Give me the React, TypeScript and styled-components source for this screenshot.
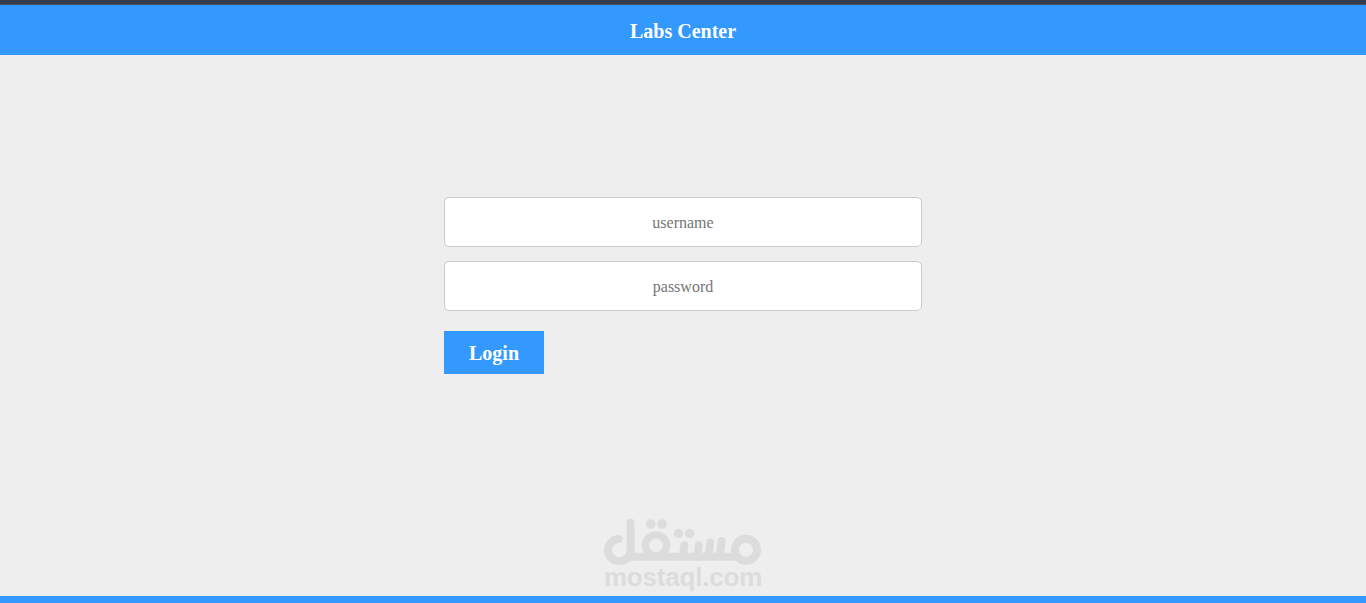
import React, { useState } from 'react'
import styled, { createGlobalStyle } from 'styled-components'

const GlobalStyle = createGlobalStyle`
  * {
    box-sizing: border-box;
  }
  body {
    margin: 0;
    background-color: #eee;
    font-family: 'Liberation Serif', 'Times New Roman', serif;
  }
`

const Page = styled.div`
  display: flex;
  flex-direction: column;
  height: 100vh;
  min-height: 603px;
  overflow: hidden;
`

const TopStrip = styled.div`
  flex: none;
  height: 5px;
  background-color: #323c4e;
  border-bottom: 1px solid #484f59;
`

const Header = styled.header`
  display: flex;
  flex: none;
  align-items: center;
  justify-content: center;
  height: 50px;
  padding-top: 2px;
  background-color: #3399ff;
`

const Title = styled.h1`
  margin: 0;
  color: #fff;
  font-size: 20px;
  line-height: 24px;
`

const Main = styled.main`
  display: flex;
  flex: 1;
  flex-direction: column;
  align-items: center;
  justify-content: space-between;
  padding: 142px 0 3px;
`

const LoginForm = styled.form`
  display: flex;
  flex-direction: column;
  width: 478px;
`

const Input = styled.input`
  width: 100%;
  height: 50px;
  margin-bottom: 14px;
  padding: 14px 20px 12px;
  border: 1px solid #ccc;
  border-radius: 5px;
  background-color: #fff;
  font-family: inherit;
  font-size: 16px;
  text-align: center;
  &::placeholder {
    color: #757575;
  }
`

const LoginButton = styled.button`
  width: 100px;
  height: 43px;
  margin-top: 6px;
  padding: 2px 0 0;
  border: none;
  background-color: #3399ff;
  color: #fff;
  font-family: inherit;
  font-size: 20px;
  font-weight: bold;
  cursor: pointer;
`

const Brand = styled.div`
  display: flex;
  flex-direction: column;
  align-items: center;
  color: #dcdcdc;
`

const Mark = styled.svg`
  display: block;
`

const BrandName = styled.span`
  height: 25px;
  font-family: 'Liberation Sans', Arial, sans-serif;
  font-size: 26px;
  font-weight: bold;
  letter-spacing: -0.2px;
  line-height: 19px;
`

const Footer = styled.footer`
  flex: none;
  height: 7px;
  background-color: #3399ff;
`

const MostaqlMark: React.FC = () => (
  <Mark viewBox="602 516 162 52" width="162" height="52" aria-hidden="true">
    <g fill="none" stroke="currentColor" strokeWidth="8" strokeLinecap="round">
      <path d="M618.8 538.9A11.2 11.2 0 1 0 630.5 549.8V522.8" />
      <path d="M630 556.7H736" />
      <circle cx="656" cy="545.3" r="10.5" strokeWidth="7.2" />
      <circle cx="746" cy="549.8" r="11" />
      <path d="M684.3 545.3L683 556" />
      <path d="M698.8 545.1L697.5 556" />
      <path d="M710.3 542.6L708.6 556" />
      <path d="M721.7 541L719.9 556" />
    </g>
    <g fill="currentColor">
      <circle cx="650.7" cy="524" r="4.8" />
      <circle cx="662" cy="524" r="4.8" />
      <circle cx="678.4" cy="533.4" r="4.7" />
      <circle cx="689.7" cy="533.4" r="4.7" />
    </g>
  </Mark>
)

const App: React.FC = () => {
  const [username, setUsername] = useState<string>('')
  const [password, setPassword] = useState<string>('')

  return (
    <Page>
      <GlobalStyle />
      <TopStrip />
      <Header>
        <Title>Labs Center</Title>
      </Header>
      <Main>
        <LoginForm onSubmit={(event) => event.preventDefault()}>
          <Input placeholder="username" value={username} onChange={(e) => setUsername(e.target.value)} />
          <Input
            type="password"
            placeholder="password"
            value={password}
            onChange={(e) => setPassword(e.target.value)}
          />
          <LoginButton type="submit">Login</LoginButton>
        </LoginForm>
        <Brand>
          <MostaqlMark />
          <BrandName>mostaql.com</BrandName>
        </Brand>
      </Main>
      <Footer />
    </Page>
  )
}

export default App
